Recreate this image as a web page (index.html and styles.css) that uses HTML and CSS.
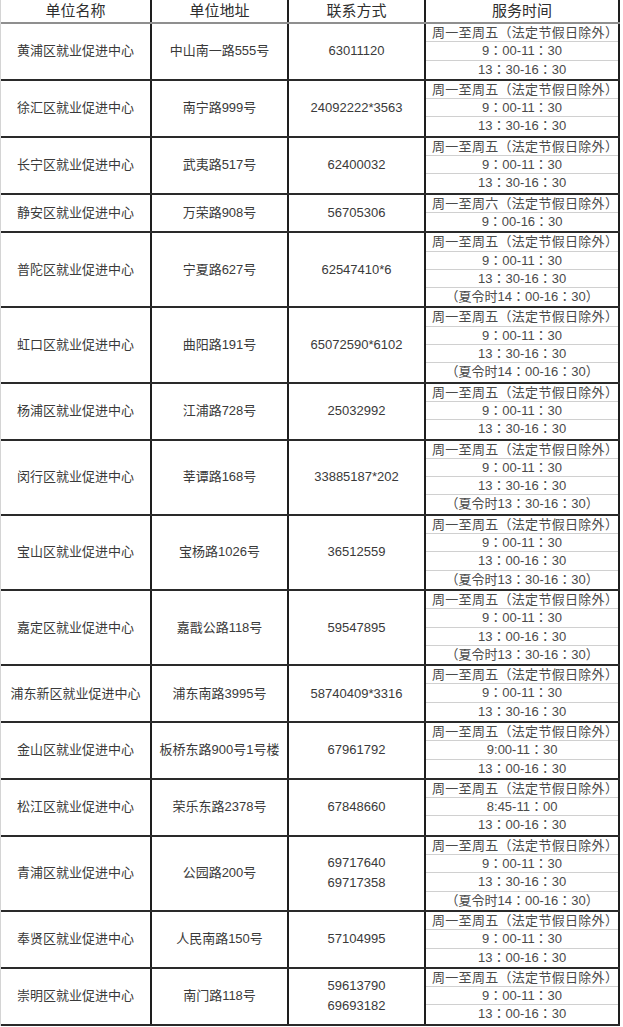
FILE: index.html
```html
<!DOCTYPE html>
<html lang="zh-CN">
<head>
<meta charset="utf-8">
<title>上海各区就业促进中心</title>
<link rel="stylesheet" href="styles.css">
</head>
<body>
<div class="table">
  <div class="row head">
    <div class="cell">单位名称</div>
    <div class="cell">单位地址</div>
    <div class="cell">联系方式</div>
    <div class="cell last">服务时间</div>
  </div>

  <div class="row">
    <div class="cell">黄浦区就业促进中心</div>
    <div class="cell">中山南一路555号</div>
    <div class="cell">63011120</div>
    <div class="cell last times"><span>周一至周五（法定节假日除外）</span><span>9：00-11：30</span><span>13：30-16：30</span></div>
  </div>
  <div class="row">
    <div class="cell">徐汇区就业促进中心</div>
    <div class="cell">南宁路999号</div>
    <div class="cell">24092222*3563</div>
    <div class="cell last times"><span>周一至周五（法定节假日除外）</span><span>9：00-11：30</span><span>13：30-16：30</span></div>
  </div>
  <div class="row">
    <div class="cell">长宁区就业促进中心</div>
    <div class="cell">武夷路517号</div>
    <div class="cell">62400032</div>
    <div class="cell last times"><span>周一至周五（法定节假日除外）</span><span>9：00-11：30</span><span>13：30-16：30</span></div>
  </div>
  <div class="row">
    <div class="cell">静安区就业促进中心</div>
    <div class="cell">万荣路908号</div>
    <div class="cell">56705306</div>
    <div class="cell last times"><span>周一至周六（法定节假日除外）</span><span>9：00-16：30</span></div>
  </div>
  <div class="row">
    <div class="cell">普陀区就业促进中心</div>
    <div class="cell">宁夏路627号</div>
    <div class="cell">62547410*6</div>
    <div class="cell last times"><span>周一至周五（法定节假日除外）</span><span>9：00-11：30</span><span>13：30-16：30</span><span>（夏令时14：00-16：30）</span></div>
  </div>
  <div class="row">
    <div class="cell">虹口区就业促进中心</div>
    <div class="cell">曲阳路191号</div>
    <div class="cell">65072590*6102</div>
    <div class="cell last times"><span>周一至周五（法定节假日除外）</span><span>9：00-11：30</span><span>13：30-16：30</span><span>（夏令时14：00-16：30）</span></div>
  </div>
  <div class="row">
    <div class="cell">杨浦区就业促进中心</div>
    <div class="cell">江浦路728号</div>
    <div class="cell">25032992</div>
    <div class="cell last times"><span>周一至周五（法定节假日除外）</span><span>9：00-11：30</span><span>13：30-16：30</span></div>
  </div>
  <div class="row">
    <div class="cell">闵行区就业促进中心</div>
    <div class="cell">莘谭路168号</div>
    <div class="cell">33885187*202</div>
    <div class="cell last times"><span>周一至周五（法定节假日除外）</span><span>9：00-11：30</span><span>13：30-16：30</span><span>（夏令时13：30-16：30）</span></div>
  </div>
  <div class="row">
    <div class="cell">宝山区就业促进中心</div>
    <div class="cell">宝杨路1026号</div>
    <div class="cell">36512559</div>
    <div class="cell last times"><span>周一至周五（法定节假日除外）</span><span>9：00-11：30</span><span>13：00-16：30</span><span>（夏令时13：30-16：30）</span></div>
  </div>
  <div class="row">
    <div class="cell">嘉定区就业促进中心</div>
    <div class="cell">嘉戬公路118号</div>
    <div class="cell">59547895</div>
    <div class="cell last times"><span>周一至周五（法定节假日除外）</span><span>9：00-11：30</span><span>13：00-16：30</span><span>（夏令时13：30-16：30）</span></div>
  </div>
  <div class="row">
    <div class="cell">浦东新区就业促进中心</div>
    <div class="cell">浦东南路3995号</div>
    <div class="cell">58740409*3316</div>
    <div class="cell last times"><span>周一至周五（法定节假日除外）</span><span>9：00-11：30</span><span>13：30-16：30</span></div>
  </div>
  <div class="row">
    <div class="cell">金山区就业促进中心</div>
    <div class="cell">板桥东路900号1号楼</div>
    <div class="cell">67961792</div>
    <div class="cell last times"><span>周一至周五（法定节假日除外）</span><span>9:00-11：30</span><span>13：00-16：30</span></div>
  </div>
  <div class="row">
    <div class="cell">松江区就业促进中心</div>
    <div class="cell">荣乐东路2378号</div>
    <div class="cell">67848660</div>
    <div class="cell last times"><span>周一至周五（法定节假日除外）</span><span>8:45-11：00</span><span>13：00-16：30</span></div>
  </div>
  <div class="row">
    <div class="cell">青浦区就业促进中心</div>
    <div class="cell">公园路200号</div>
    <div class="cell">69717640<br>69717358</div>
    <div class="cell last times"><span>周一至周五（法定节假日除外）</span><span>9：00-11：30</span><span>13：30-16：30</span><span>（夏令时14：00-16：30）</span></div>
  </div>
  <div class="row">
    <div class="cell">奉贤区就业促进中心</div>
    <div class="cell">人民南路150号</div>
    <div class="cell">57104995</div>
    <div class="cell last times"><span>周一至周五（法定节假日除外）</span><span>9：00-11：30</span><span>13：00-16：30</span></div>
  </div>
  <div class="row">
    <div class="cell">崇明区就业促进中心</div>
    <div class="cell">南门路118号</div>
    <div class="cell">59613790<br>69693182</div>
    <div class="cell last times"><span>周一至周五（法定节假日除外）</span><span>9：00-11：30</span><span>13：00-16：30</span></div>
  </div>
</div>
</body>
</html>
```
FILE: styles.css
```css
html, body {
  margin: 0;
  padding: 0;
  background: #ffffff;
}

body {
  font-family: "Liberation Sans", "Noto Sans CJK SC", sans-serif;
  color: #3a3a3a;
  font-size: 13px;
}

.table {
  width: 620px;
  border-left: 1px solid #d4d4d4;
  box-sizing: border-box;
}

.row {
  display: grid;
  grid-template-columns: 151px 137px 137px 1fr;
  border-bottom: 2px solid #2a2a2a;
}

.row.head {
  height: 24px;
  box-sizing: border-box;
  border-bottom: 2px solid #8f8f8f;
}

.cell {
  display: flex;
  align-items: center;
  justify-content: center;
  text-align: center;
  border-right: 2px solid #1e1e1e;
  line-height: 20px;
  white-space: nowrap;
}

.head .cell {
  font-size: 15px;
  color: #2e2e2e;
  line-height: 22px;
}

.times {
  flex-direction: column;
  align-items: stretch;
  justify-content: flex-start;
  color: #4a4a4a;
  font-family: "Liberation Sans", "Noto Sans CJK JP", "Noto Sans CJK SC", sans-serif;
  font-feature-settings: "locl" 0;
}

.times span {
  display: block;
  height: 18.3px;
  line-height: 18px;
  border-bottom: 1px solid #d0d0d0;
  box-sizing: border-box;
}

.times span:first-child {
  letter-spacing: 0.3px;
  padding-left: 6px;
}

.times span:last-child {
  border-bottom: none;
}
```
